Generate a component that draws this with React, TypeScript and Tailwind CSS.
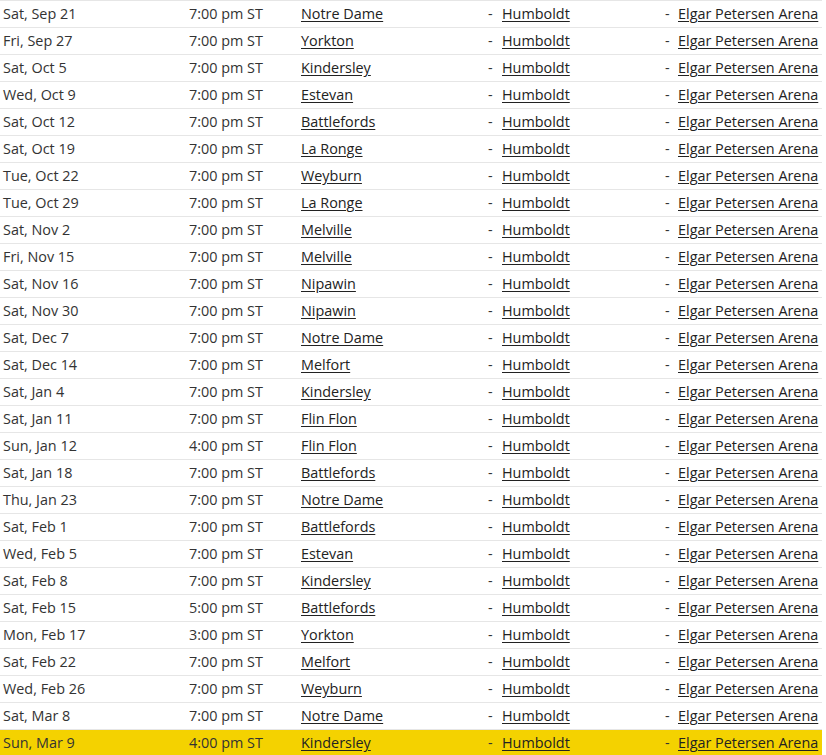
import React from "react";

const rows: [string, string, string][] = [
  ["Sat, Sep 21", "7:00 pm ST", "Notre Dame"],
  ["Fri, Sep 27", "7:00 pm ST", "Yorkton"],
  ["Sat, Oct 5", "7:00 pm ST", "Kindersley"],
  ["Wed, Oct 9", "7:00 pm ST", "Estevan"],
  ["Sat, Oct 12", "7:00 pm ST", "Battlefords"],
  ["Sat, Oct 19", "7:00 pm ST", "La Ronge"],
  ["Tue, Oct 22", "7:00 pm ST", "Weyburn"],
  ["Tue, Oct 29", "7:00 pm ST", "La Ronge"],
  ["Sat, Nov 2", "7:00 pm ST", "Melville"],
  ["Fri, Nov 15", "7:00 pm ST", "Melville"],
  ["Sat, Nov 16", "7:00 pm ST", "Nipawin"],
  ["Sat, Nov 30", "7:00 pm ST", "Nipawin"],
  ["Sat, Dec 7", "7:00 pm ST", "Notre Dame"],
  ["Sat, Dec 14", "7:00 pm ST", "Melfort"],
  ["Sat, Jan 4", "7:00 pm ST", "Kindersley"],
  ["Sat, Jan 11", "7:00 pm ST", "Flin Flon"],
  ["Sun, Jan 12", "4:00 pm ST", "Flin Flon"],
  ["Sat, Jan 18", "7:00 pm ST", "Battlefords"],
  ["Thu, Jan 23", "7:00 pm ST", "Notre Dame"],
  ["Sat, Feb 1", "7:00 pm ST", "Battlefords"],
  ["Wed, Feb 5", "7:00 pm ST", "Estevan"],
  ["Sat, Feb 8", "7:00 pm ST", "Kindersley"],
  ["Sat, Feb 15", "5:00 pm ST", "Battlefords"],
  ["Mon, Feb 17", "3:00 pm ST", "Yorkton"],
  ["Sat, Feb 22", "7:00 pm ST", "Melfort"],
  ["Wed, Feb 26", "7:00 pm ST", "Weyburn"],
  ["Sat, Mar 8", "7:00 pm ST", "Notre Dame"],
  ["Sun, Mar 9", "4:00 pm ST", "Kindersley"],
];

export default function App() {
  return (
    <div
      className="w-[822px] bg-white text-[14.4px] text-[#333]"
      style={{ fontFamily: '"Open Sans", "Liberation Sans", sans-serif' }}
    >
      {rows.map((r, i) => {
        const last = i === rows.length - 1;
        return (
          <div
            key={i}
            className={`grid h-[27px] grid-cols-[186px_112px_187px_177px_160px] items-center border-t border-[#e6e6e6] leading-[26px] ${
              last ? "bg-[#f4d200]" : ""
            }`}
          >
            <div className="pl-[3px]">{r[0]}</div>
            <div className="pl-[3px]">{r[1]}</div>
            <div className="pl-[3px]">
              <a className="text-[#222] underline underline-offset-2">{r[2]}</a>
            </div>
            <div className="flex pl-[3px]">
              <span className="w-[14px]">-</span>
              <a className="text-[#222] underline underline-offset-2">Humboldt</a>
            </div>
            <div className="flex pl-[3px]">
              <span className="w-[13px]">-</span>
              <a className="text-[#222] underline underline-offset-2">Elgar Petersen Arena</a>
            </div>
          </div>
        );
      })}
    </div>
  );
}
